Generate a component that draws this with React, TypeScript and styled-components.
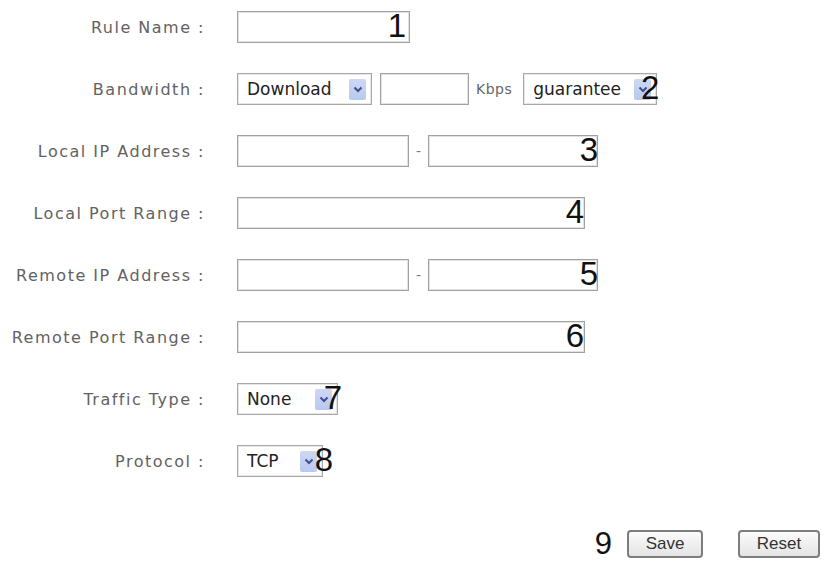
import React from 'react';
import styled, { createGlobalStyle } from 'styled-components';

const GlobalStyle = createGlobalStyle`
  html, body {
    margin: 0;
    padding: 0;
    background: #ffffff;
  }
`;

const Page = styled.div`
  width: 832px;
  height: 567px;
  overflow: hidden;
  padding-top: 11px;
  box-sizing: border-box;
  font-family: 'DejaVu Sans', Verdana, sans-serif;
`;

const Form = styled.div`
  display: grid;
  grid-template-columns: 205px 1fr;
  column-gap: 32px;
  row-gap: 30px;
  grid-auto-rows: 32px;
`;

const Label = styled.div`
  display: flex;
  align-items: center;
  justify-content: flex-end;
  font-size: 16px;
  letter-spacing: 1.5px;
  color: #626262;
  white-space: nowrap;
`;

const Controls = styled.div`
  display: flex;
  align-items: center;
`;

const Field = styled.div<{ $width: number; $ml?: number }>`
  position: relative;
  width: ${({ $width }) => $width}px;
  height: 32px;
  margin-left: ${({ $ml = 0 }) => $ml}px;
  flex-shrink: 0;
`;

const TextBox = styled.input`
  width: 100%;
  height: 100%;
  box-sizing: border-box;
  margin: 0;
  border: 1px solid #a2a2a2;
  box-shadow: inset 0 0 0 1px #e2e2e2;
  background: #fff;
  outline: none;
`;

const SelectBox = styled.div`
  width: 100%;
  height: 100%;
  box-sizing: border-box;
  border: 1px solid #a8a8a8;
  box-shadow: inset 0 0 0 1px #e6e6e6;
  background: #fff;
  display: flex;
  align-items: center;
  justify-content: space-between;
  padding: 0 5px 0 9px;
  font-size: 17px;
  color: #222;
`;

const Arrow = styled.span`
  width: 17px;
  height: 21px;
  background: linear-gradient(#cdd8f4, #b9c8ef);
  border-radius: 2px;
  display: flex;
  align-items: center;
  justify-content: center;
`;

const Marker = styled.span<{ $right: number }>`
  position: absolute;
  right: ${({ $right }) => $right}px;
  top: 50%;
  transform: translateY(-54%);
  font-family: 'Liberation Sans', Arial, sans-serif;
  font-size: 33px;
  line-height: 1;
  color: #111;
  pointer-events: none;
`;

const Dash = styled.span`
  width: 19px;
  text-align: center;
  color: #777;
  font-size: 14px;
`;

const Unit = styled.span`
  margin: 0 11px 0 7px;
  font-size: 14px;
  color: #666;
  letter-spacing: 0.5px;
`;

const Footer = styled.div`
  display: flex;
  justify-content: flex-end;
  align-items: center;
  margin-top: 51px;
  padding-right: 12px;
`;

const FooterMarker = styled.span`
  font-family: 'Liberation Sans', Arial, sans-serif;
  font-size: 31px;
  color: #111;
  margin-right: 15px;
  line-height: 1;
`;

const Button = styled.button<{ $width: number }>`
  width: ${({ $width }) => $width}px;
  height: 28px;
  margin: 0;
  padding: 0;
  border: 2px solid #7d7d7d;
  border-radius: 4px;
  background: linear-gradient(#fbfbfb, #e4e4e4);
  font-family: 'Liberation Sans', Arial, sans-serif;
  font-size: 17px;
  color: #333;
  & + & {
    margin-left: 35px;
  }
`;

const Chevron = () => (
  <svg width="10" height="7" viewBox="0 0 10 7">
    <path d="M1.5 1.5 L5 5 L8.5 1.5" fill="none" stroke="#3f4f8f" strokeWidth="2" />
  </svg>
);

const Select: React.FC<{ value: string }> = ({ value }) => (
  <SelectBox>
    <span>{value}</span>
    <Arrow>
      <Chevron />
    </Arrow>
  </SelectBox>
);

export default function App() {
  return (
    <Page>
      <GlobalStyle />
      <Form>
        <Label>Rule Name :</Label>
        <Controls>
          <Field $width={173}>
            <TextBox />
            <Marker $right={4}>1</Marker>
          </Field>
        </Controls>

        <Label>Bandwidth :</Label>
        <Controls>
          <Field $width={135}>
            <Select value="Download" />
          </Field>
          <Field $width={89} $ml={8}>
            <TextBox />
          </Field>
          <Unit>Kbps</Unit>
          <Field $width={134}>
            <Select value="guarantee" />
            <Marker $right={-2}>2</Marker>
          </Field>
        </Controls>

        <Label>Local IP Address :</Label>
        <Controls>
          <Field $width={172}>
            <TextBox />
          </Field>
          <Dash>-</Dash>
          <Field $width={170}>
            <TextBox />
            <Marker $right={0}>3</Marker>
          </Field>
        </Controls>

        <Label>Local Port Range :</Label>
        <Controls>
          <Field $width={348}>
            <TextBox />
            <Marker $right={1}>4</Marker>
          </Field>
        </Controls>

        <Label>Remote IP Address :</Label>
        <Controls>
          <Field $width={172}>
            <TextBox />
          </Field>
          <Dash>-</Dash>
          <Field $width={170}>
            <TextBox />
            <Marker $right={0}>5</Marker>
          </Field>
        </Controls>

        <Label>Remote Port Range :</Label>
        <Controls>
          <Field $width={348}>
            <TextBox />
            <Marker $right={1}>6</Marker>
          </Field>
        </Controls>

        <Label>Traffic Type :</Label>
        <Controls>
          <Field $width={101}>
            <Select value="None" />
            <Marker $right={-4}>7</Marker>
          </Field>
        </Controls>

        <Label>Protocol :</Label>
        <Controls>
          <Field $width={86}>
            <Select value="TCP" />
            <Marker $right={-10}>8</Marker>
          </Field>
        </Controls>
      </Form>
      <Footer>
        <FooterMarker>9</FooterMarker>
        <Button $width={76}>Save</Button>
        <Button $width={82}>Reset</Button>
      </Footer>
    </Page>
  );
}
